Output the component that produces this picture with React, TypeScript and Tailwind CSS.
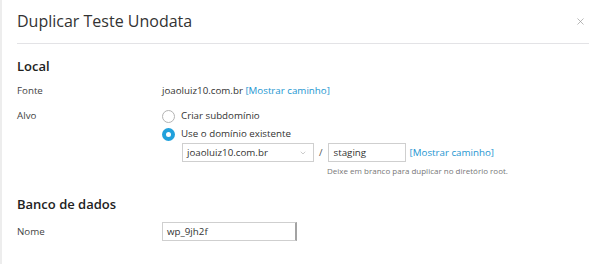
import { X, ChevronDown } from 'lucide-react';

const font = { fontFamily: '"Open Sans", "Noto Sans", sans-serif' };

function Radio({ checked, label }: { checked?: boolean; label: string }) {
  return (
    <label className="flex items-center h-[18px] gap-[6px] cursor-pointer">
      {checked ? (
        <span className="w-[13px] h-[13px] rounded-full bg-[#21a1dc] flex items-center justify-center">
          <span className="w-[5px] h-[5px] rounded-full bg-white" />
        </span>
      ) : (
        <span className="w-[13px] h-[13px] rounded-full border border-[#b3b3b3] bg-white" />
      )}
      <span className="text-[9.75px] text-[#333]">{label}</span>
    </label>
  );
}

export default function App() {
  return (
    <div className="w-[600px] h-[264px] bg-white border-l-2 border-[#ededed] overflow-hidden text-[#333]" style={font}>
      {/* Header */}
      <div className="ml-[15px] mr-[11px] pt-[10px] pb-[11px] border-b border-[#e3e3e6] flex items-center justify-between">
        <h1 className="text-[16px] leading-[22px] text-[#333]">Duplicar Teste Unodata</h1>
        <button className="text-[#999] pr-[3px]">
          <X className="w-[11px] h-[11px]" strokeWidth={1.5} />
        </button>
      </div>

      <div className="pl-[15px]">
        {/* Local */}
        <h2 className="mt-[13px] text-[13px] leading-[18px] font-semibold text-[#222]">Local</h2>

        <div className="mt-[9px] flex text-[9.75px] leading-[14px]">
          <div className="w-[145px] text-[#444]">Fonte</div>
          <div>
            joaoluiz10.com.br <a className="text-[#2496d1]">[Mostrar caminho]</a>
          </div>
        </div>

        <div className="mt-[9px] flex text-[9.75px] leading-[14px]">
          <div className="w-[145px] text-[#444] pt-[2px]">Alvo</div>
          <div className="flex flex-col">
            <Radio label="Criar subdomínio" />
            <Radio checked label="Use o domínio existente" />
            <div className="ml-[20px]">
              <div className="flex items-center">
                <div className="w-[132px] h-[19px] border border-[#cfcfcf] flex items-center justify-between pl-[4px] pr-[6px]">
                  <span>joaoluiz10.com.br</span>
                  <ChevronDown className="w-[8px] h-[8px] text-[#999]" strokeWidth={1.5} />
                </div>
                <span className="mx-[5px] text-[#555]">/</span>
                <div className="w-[78px] h-[19px] border border-[#cfcfcf] flex items-center pl-[5px]">staging</div>
                <a className="ml-[4px] text-[#2496d1]">[Mostrar caminho]</a>
              </div>
              <div className="ml-[145px] mt-[3px] text-[8px] leading-[11px] text-[#777]">
                Deixe em branco para duplicar no diretório root.
              </div>
            </div>
          </div>
        </div>

        {/* Banco de dados */}
        <h2 className="mt-[19px] text-[13px] leading-[18px] font-semibold text-[#222]">Banco de dados</h2>

        <div className="mt-[9px] flex items-center text-[9.75px] leading-[14px]">
          <div className="w-[145px] text-[#444]">Nome</div>
          <div className="w-[135px] h-[19px] border border-[#cfcfcf] border-r-2 border-r-[#a3a3a3] flex items-center pl-[4px]">
            wp_9jh2f
          </div>
        </div>
      </div>
    </div>
  );
}
